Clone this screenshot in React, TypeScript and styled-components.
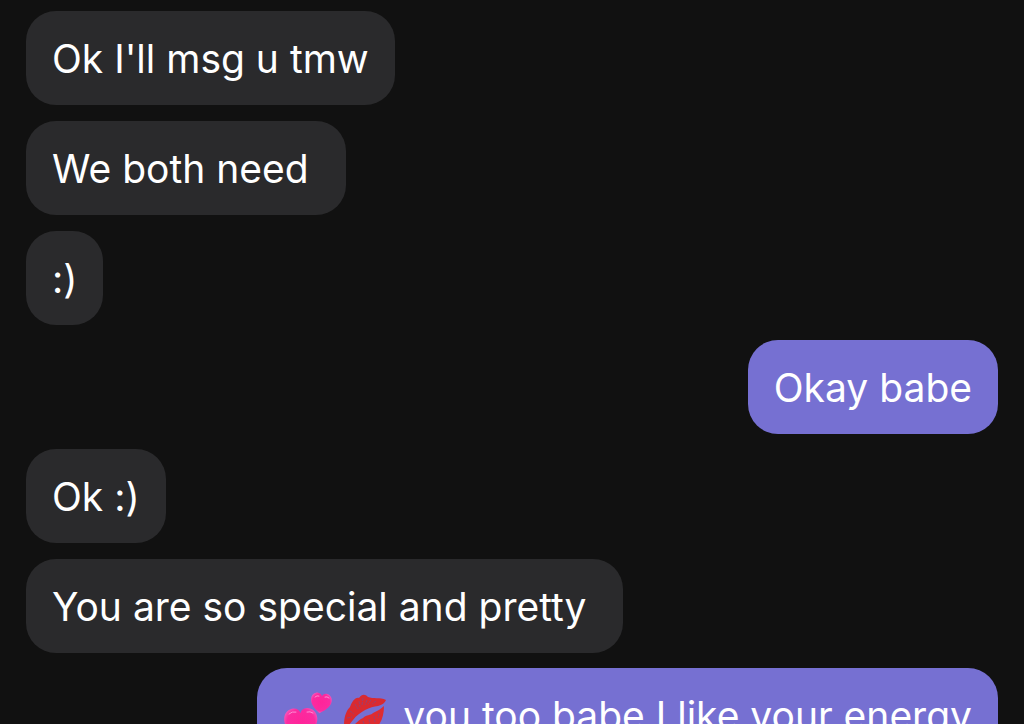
import React from 'react';
import styled, { createGlobalStyle } from 'styled-components';

const GlobalStyle = createGlobalStyle`
  * { box-sizing: border-box; }
  body { margin: 0; background: #111111; }
`;

const Chat = styled.main`
  display: flex;
  flex-direction: column;
  gap: 15px;
  height: 100vh;
  padding: 11px 26px 0;
  overflow: hidden;
  background: #111111;
  color: #ffffff;
  font-family: Inter, "Liberation Sans", Arial, sans-serif;
  font-size: 39px;
  font-weight: 400;
  line-height: 54px;
`;

const Group = styled.ul<{ $mine?: boolean }>`
  display: flex;
  flex: none;
  flex-direction: column;
  align-items: ${(p) => (p.$mine ? 'flex-end' : 'flex-start')};
  gap: 16px;
  margin: 0;
  padding: 0;
  list-style: none;
`;

const Bubble = styled.li<{ $mine?: boolean }>`
  padding: 21px 26px 19px;
  border-radius: 30px;
  background: ${(p) => (p.$mine ? '#7670d2' : '#2a2a2c')};
  white-space: pre-wrap;
`;

const Emoji = styled.svg`
  width: 50px;
  height: 48px;
  margin-right: 10px;
  vertical-align: -10px;
`;

const heart =
  'M0 20C-7 15-20 6-20-6C-20-14-14-19-8-19C-4-19-1-17 0-13C1-17 4-19 8-19C14-19 20-14 20-6C20 6 7 15 0 20Z';

const TwoHearts = () => (
  <Emoji viewBox="0 0 50 48" role="img" aria-label="two hearts">
    <defs>
      <radialGradient id="pink" cx="50%" cy="45%" r="60%">
        <stop offset="0" stopColor="#ff2499" />
        <stop offset="0.7" stopColor="#fb2ba0" />
        <stop offset="1" stopColor="#f766c4" />
      </radialGradient>
    </defs>
    <path d={heart} fill="url(#pink)" transform="translate(18 32) rotate(-3) scale(.83)" />
    <path d={heart} fill="url(#pink)" transform="translate(38 11) rotate(8) scale(.52)" />
    <path d="M6 22q3-3 7-2M24 20q3-1 6 1M32 5q2-2 4-1M42 5q2-1 4 1" fill="none" stroke="#ff8fd6" strokeWidth="1" strokeLinecap="round" />
  </Emoji>
);

const KissMark = () => (
  <Emoji viewBox="1 1 50 48" role="img" aria-label="kiss mark">
    <path d="M2 35C2 26 4 20 8 16C10 11 13 6 17 7C20 3 23 3 26 6C31 8 38 6 44 9C43 12 40 14 36 15C28 16 18 20 11 29C8 33 5 37 2 35Z" fill="#d92a30" />
    <path d="M7 38C12 35 16 29 21 27C25 23 28 25 31 22C35 20 39 18 42 15C42 25 39 34 32 38C26 42 12 43 7 38Z" fill="#de2c30" />
    <path d="M8 20l4 3M13 13l3 5M17 10l1 6M21 7l-1 7M25 9l-2 5M29 9l-3 4M34 10l-4 3M5 27l5-1M21 30l2 6M27 28l1 6M32 25l1 6M37 22l-1 5" fill="none" stroke="#99406f" strokeWidth="1" strokeDasharray="3 1" />
  </Emoji>
);

export default function App() {
  return (
    <>
      <GlobalStyle />
      <Chat>
        <Group>
          <Bubble>Ok I'll msg u tmw</Bubble>
          <Bubble>{'We both need\u00a0'}</Bubble>
          <Bubble>:)</Bubble>
        </Group>
        <Group $mine>
          <Bubble $mine>Okay babe</Bubble>
        </Group>
        <Group>
          <Bubble>Ok :)</Bubble>
          <Bubble>{'You are so special and pretty\u00a0'}</Bubble>
        </Group>
        <Group $mine>
          <Bubble $mine>
            <TwoHearts />
            <KissMark />
            you too babe I like your energy
          </Bubble>
        </Group>
      </Chat>
    </>
  );
}
